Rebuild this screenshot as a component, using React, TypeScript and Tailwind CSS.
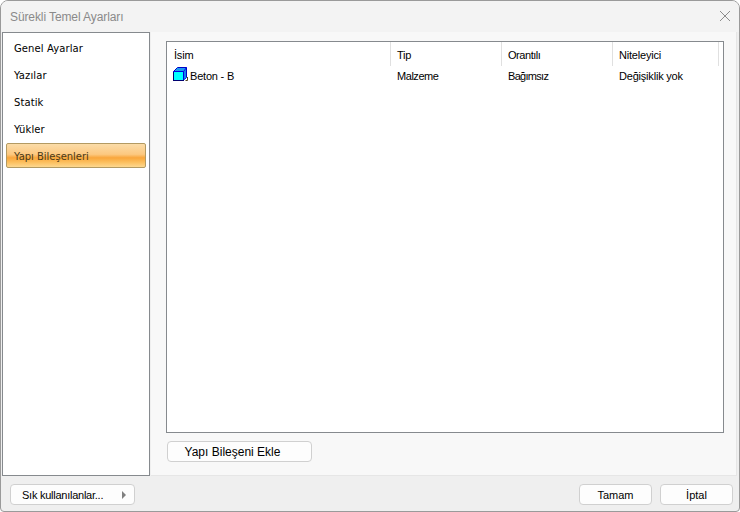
const navItems = ["Genel Ayarlar", "Yazılar", "Statik", "Yükler"];

const columns = [
  { label: "İsim", width: "w-[224px] pl-[7px]" },
  { label: "Tip", width: "w-[111px] pl-[6px]" },
  { label: "Orantılı", width: "w-[111px] pl-[6px] tracking-[-0.45px]" },
  { label: "Niteleyici", width: "w-[106px] pl-[6px]" },
];

const CubeIcon = () => (
  <svg width="16" height="15" viewBox="0 0 16 15" className="shrink-0 mb-[4px]">
    <path d="M0.5 4.5 L4.5 0.5 H13.5 V10.5 L10.5 13.5 H0.5 Z" fill="#00ffff" />
    <path d="M1 4.5 L4.5 1 H13 L10 4.5 Z" fill="#1e98f0" />
    <path d="M10.5 4.5 L13 1.5 V10 L10.5 13 Z" fill="#1080f0" />
    <path d="M0.5 13.5 V4.5 L4.5 0.5 H13.5 V10.5" fill="none" stroke="#0000c8" />
    <path d="M0.5 4.5 H10.5 V13 L13.5 10.5 M10.5 4.5 L13.5 0.5" fill="none" stroke="#0000e0" />
    <path d="M0 13.5 H11 M0.5 5 V13.5" stroke="#000070" />
    <path d="M12.5 13.5 H14.5 V10" fill="none" stroke="#504020" />
  </svg>
);

const Button = ({ className, children }: { className: string; children: React.ReactNode }) => (
  <button
    className={`flex items-center justify-center h-[21px] bg-[#fdfdfd] border border-[#d0d0d0] rounded-[4px] text-black ${className}`}
  >
    {children}
  </button>
);

export default function App() {
  return (
    <div className="w-[740px] h-[512px] flex flex-col bg-[#efefef] border border-[#9a9a9a] rounded-t-[8px] rounded-b-[4px] overflow-hidden font-['Liberation_Sans',sans-serif]">
      {/* title bar */}
      <div className="h-[31px] shrink-0 flex items-center justify-between pl-[9px] pr-[8px] bg-[#f3f3f3]">
        <span className="text-[12px] tracking-[-0.1px] text-[#8a8a8a]">Sürekli Temel Ayarları</span>
        <svg width="12" height="12" viewBox="0 0 12 12" className="mb-[1px]">
          <path d="M1 1 L11 11 M11 1 L1 11" stroke="#8c8c8c" strokeWidth="1" fill="none" />
        </svg>
      </div>

      <div className="h-[444px] shrink-0 flex pl-[1px] pr-[2px]">
        {/* left list */}
        <div className="w-[148px] shrink-0 bg-white border border-[#868a8e] pt-[2px] px-[3px] font-['DejaVu_Sans',sans-serif]">
          {navItems.map((item) => (
            <div key={item} className="h-[27px] flex items-center pl-[8px] text-[10px] tracking-[0.1px] text-black">
              {item}
            </div>
          ))}
          <div className="h-[25px] flex items-center pl-[7px] pt-[1px] text-[10px] tracking-[-0.03px] text-[#4a3a18] border border-[#b39a62] rounded-[2px] bg-[linear-gradient(to_bottom,#fbdca8_0%,#fcc880_45%,#f9a63c_60%,#fcc060_80%,#fdd890_100%)]">
            Yapı Bileşenleri
          </div>
        </div>

        {/* content panel */}
        <div className="flex-1 min-w-0 ml-[1px] bg-[#f8f8f8] border-b border-r border-[#e6e6e6] pt-[9px] pl-[15px] pr-[12px]">
          <div className="h-[392px] bg-white border border-[#868a8e]">
            <div className="flex h-[24px] items-center text-[11px] text-black tracking-[-0.2px]">
              {columns.map((col) => (
                <div key={col.label} className={`${col.width} h-[24px] flex items-center pt-[3px] border-r border-[#e0e0e0]`}>
                  {col.label}
                </div>
              ))}
            </div>
            <div className="flex h-[19px] pt-[2px] items-center text-[11px] text-black tracking-[-0.2px]">
              <div className="w-[224px] pl-[6px] flex items-center gap-[1px]">
                <CubeIcon />
                Beton - B
              </div>
              <div className="w-[111px] pl-[6px] tracking-[-0.45px]">Malzeme</div>
              <div className="w-[111px] pl-[6px] tracking-[-0.7px]">Bağımsız</div>
              <div className="pl-[6px]">Değişiklik yok</div>
            </div>
          </div>
          <Button className="w-[145px] mt-[8px] ml-[1px] pr-[14px] text-[12px]">Yapı Bileşeni Ekle</Button>
        </div>
      </div>

      {/* footer */}
      <div className="flex-1 flex items-center justify-between pl-[9px] pr-[6px] pt-[2px]">
        <Button className="w-[125px] !justify-start pl-[11px] pt-[1px] relative text-[11px] tracking-[-0.25px]">
          Sık kullanılanlar...
          <span className="absolute right-[8px] top-[6px] w-0 h-0 border-y-[4px] border-y-transparent border-l-[4px] border-l-[#808080]" />
        </Button>
        <div className="flex gap-[8px] text-[11px]">
          <Button className="w-[73px] pt-[1px]">Tamam</Button>
          <Button className="w-[73px] pt-[1px]">İptal</Button>
        </div>
      </div>
    </div>
  );
}
